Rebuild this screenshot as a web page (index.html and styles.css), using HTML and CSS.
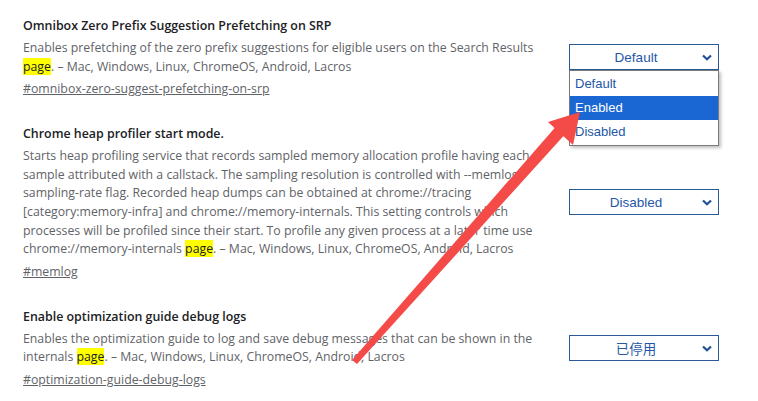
FILE: index.html
```html
<!DOCTYPE html>
<html lang="en">

<head>
    <meta charset="UTF-8">
    <title>Experiments</title>
    <link rel="stylesheet" href="styles.css">
</head>

<body>
    <div class="flags">
        <div class="experiment">
            <div class="experiment-text">
                <h3 class="experiment-name">Omnibox Zero Prefix Suggestion Prefetching on SRP</h3>
                <p class="experiment-desc">
                    Enables prefetching of the zero prefix suggestions for eligible users on the Search Results<br>
                    <mark>page</mark>. – Mac, Windows, Linux, ChromeOS, Android, Lacros
                </p>
                <a class="permalink" href="#omnibox-zero-suggest-prefetching-on-srp">#omnibox-zero-suggest-prefetching-on-srp</a>
            </div>
            <div class="experiment-actions">
                <div class="select open">
                    <span>Default</span>
                    <svg class="chevron" width="10" height="7" viewBox="0 0 10 7"><path d="M1 1.5 L5 5.2 L9 1.5" fill="none" stroke="#1f4f95" stroke-width="2.2"/></svg>
                    <ul class="options">
                        <li>Default</li>
                        <li class="selected">Enabled</li>
                        <li>Disabled</li>
                    </ul>
                </div>
            </div>
        </div>

        <div class="experiment">
            <div class="experiment-text">
                <h3 class="experiment-name">Chrome heap profiler start mode.</h3>
                <p class="experiment-desc">
                    Starts heap profiling service that records sampled memory allocation profile having each<br>
                    sample attributed with a callstack. The sampling resolution is controlled with --memlog-<br>
                    sampling-rate flag. Recorded heap dumps can be obtained at chrome://tracing<br>
                    [category:memory-infra] and chrome://memory-internals. This setting controls which<br>
                    processes will be profiled since their start. To profile any given process at a later time use<br>
                    chrome://memory-internals <mark>page</mark>. – Mac, Windows, Linux, ChromeOS, Android, Lacros
                </p>
                <a class="permalink" href="#memlog">#memlog</a>
            </div>
            <div class="experiment-actions">
                <div class="select">
                    <span>Disabled</span>
                    <svg class="chevron" width="10" height="7" viewBox="0 0 10 7"><path d="M1 1.5 L5 5.2 L9 1.5" fill="none" stroke="#1f4f95" stroke-width="2.2"/></svg>
                </div>
            </div>
        </div>

        <div class="experiment">
            <div class="experiment-text">
                <h3 class="experiment-name">Enable optimization guide debug logs</h3>
                <p class="experiment-desc">
                    Enables the optimization guide to log and save debug messages that can be shown in the<br>
                    internals <mark>page</mark>. – Mac, Windows, Linux, ChromeOS, Android, Lacros
                </p>
                <a class="permalink" href="#optimization-guide-debug-logs">#optimization-guide-debug-logs</a>
            </div>
            <div class="experiment-actions">
                <div class="select">
                    <span>已停用</span>
                    <svg class="chevron" width="10" height="7" viewBox="0 0 10 7"><path d="M1 1.5 L5 5.2 L9 1.5" fill="none" stroke="#1f4f95" stroke-width="2.2"/></svg>
                </div>
            </div>
        </div>
    </div>

    <!-- annotation arrow -->
    <svg class="annotation" width="758" height="401" viewBox="0 0 758 401">
        <polygon points="352,360 357,364 568,131 559,123" fill="#f44b49"/>
        <polygon points="580,112 548,122 573,145" fill="#f44b49"/>
    </svg>
</body>

</html>
```

FILE: styles.css
```css
* {
    margin: 0;
    padding: 0;
    box-sizing: border-box;
}

body {
    font-family: 'Open Sans', 'Noto Sans', sans-serif;
    background: #fff;
    color: #5f6368;
    width: 758px;
    height: 401px;
    overflow: hidden;
    position: relative;
}

.flags {
    padding: 16px 0 0 23px;
    display: flex;
    flex-direction: column;
    gap: 26px;
}

.experiment {
    display: flex;
    align-items: center;
    gap: 36px;
}

.experiment-text {
    width: 510px;
    flex-shrink: 0;
}

.experiment-name {
    font-size: 12.4px;
    font-weight: 600;
    color: #202124;
    line-height: 20px;
    margin-bottom: 3px;
}

.experiment-desc {
    font-size: 12.3px;
    line-height: 18.6px;
    color: #5f6368;
    white-space: nowrap;
}

.experiment-desc mark {
    background: #ffff00;
    color: #202124;
}

.permalink {
    display: inline-block;
    margin-top: 2px;
    font-size: 12.3px;
    line-height: 18px;
    color: #5f6368;
    text-decoration: underline;
}

.select {
    position: relative;
    width: 150px;
    height: 26px;
    padding-right: 16px;
    border: 1px solid #2b5a98;
    background: #fff;
    display: flex;
    align-items: center;
    justify-content: center;
    font-family: 'Liberation Sans', Arial, 'Noto Sans CJK SC', sans-serif;
    font-size: 13.5px;
    color: #2457a6;
}

.chevron {
    position: absolute;
    right: 6px;
    top: 9px;
}

.options {
    position: absolute;
    left: -1px;
    top: 25px;
    width: 150px;
    list-style: none;
    background: #fff;
    border: 1px solid #7a7a7a;
    box-shadow: 2px 2px 3px rgba(0, 0, 0, 0.25);
    z-index: 2;
    font-size: 13px;
    padding: 1px 0;
}

.options li {
    height: 24px;
    line-height: 24px;
    padding-left: 5px;
    color: #2457a6;
}

.options li.selected {
    background: #1a67d3;
    color: #fff;
}

.annotation {
    position: absolute;
    left: 0;
    top: 0;
    pointer-events: none;
    z-index: 5;
}
```
